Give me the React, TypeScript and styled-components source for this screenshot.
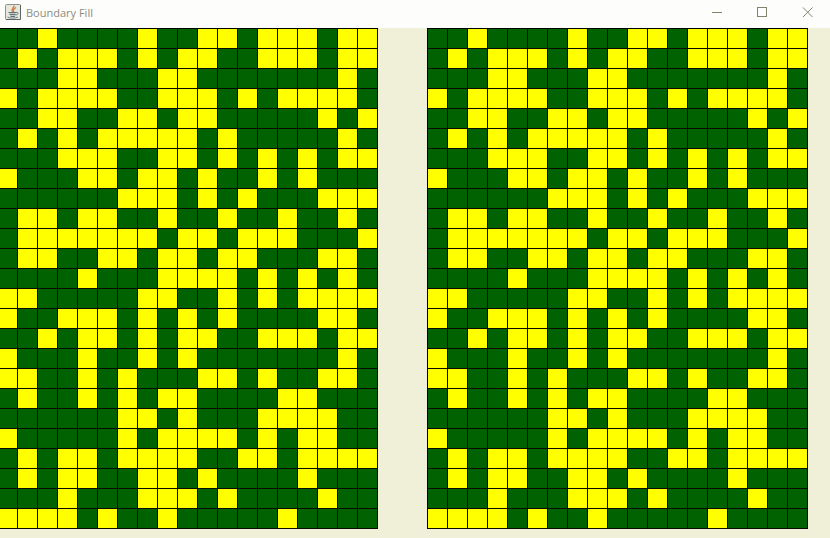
import React from "react";
import styled, { createGlobalStyle } from "styled-components";

const GlobalStyle = createGlobalStyle`
  body {
    margin: 0;
    background: #f0f0d8;
    font-family: "Open Sans", "Noto Sans", sans-serif;
  }
`;

const ROWS = [
  "..Y....Y..YY.YYY.YY",
  ".Y.YYY.Y.YY..YYY.YY",
  "...YY...YY.......Y.",
  "Y.YYYY..YYY.Y.YYYY.",
  "..YY..YY.YY.....Y.Y",
  ".Y.Y.YYYYY.Y.....Y.",
  "...YYY..YY.Y.Y.Y.YY",
  "Y...YY.YY.Y..Y.Y...",
  "......YYY.Y.Y...YYY",
  ".YY.YY..Y..Y..Y..Y.",
  ".YYYYYYY.YY.YYY...Y",
  ".YY..YY.YY.YY...YY.",
  "....Y...YYYY.Y.Y.Y.",
  "YY.....YY..Y.Y.YYYY",
  "Y..YYY.Y.Y.Y....YY.",
  "..Y.YY.Y.YY..YYY.YY",
  "Y...Y..Y.Y.......Y.",
  "YY..Y.Y...YY.Y..YY.",
  ".Y..Y.Y.YY....YY...",
  "......YY.Y...YYYY..",
  "Y.....Y.YYYY.Y.YY..",
  ".Y.YY.YYYY..YY.YYYY",
  ".Y.YY..YY.Y....Y...",
  "...Y...YYY.Y....Y..",
  "YYYY.Y..Y.....Y....",
];

const Window = styled.div`
  display: flex;
  flex-direction: column;
  min-height: 100vh;
  overflow: hidden;
`;

const TitleBar = styled.header`
  display: flex;
  align-items: center;
  height: 28px;
  padding-left: 5px;
  box-sizing: border-box;
  background: #fdfdfb;
`;

const Title = styled.h1`
  flex: 1;
  margin: 0 0 2px 5px;
  font-size: 11px;
  line-height: 16px;
  font-weight: 400;
  color: #8c8c80;
  white-space: nowrap;
`;

const AppIcon = styled.svg`
  display: block;
  flex: none;
  margin-bottom: 4px;
`;

const WindowButtons = styled.div`
  display: flex;
`;

const WindowButton = styled.button`
  display: flex;
  align-items: center;
  justify-content: center;
  width: 45px;
  height: 25px;
  margin-bottom: 3px;
  padding: 0;
  border: 0;
  background: transparent;
  color: #828270;
`;

const Canvas = styled.main`
  display: flex;
  align-items: flex-start;
  gap: 49px;
  flex: 1;
  padding-bottom: 9px;
  background: #f0f0d8;
`;

const Board = styled.div<{ $clipped?: boolean }>`
  display: grid;
  grid-template-columns: ${(p) => (p.$clipped ? "18px" : "20px")} repeat(18, 20px);
  grid-auto-rows: 20px;
  border-top: 1px solid #000;
  border-left: ${(p) => (p.$clipped ? "0" : "1px solid #000")};
`;

const Cell = styled.div<{ $filled: boolean }>`
  border-right: 1px solid #0a0a00;
  border-bottom: 1px solid #0a0a00;
  background: ${(p) => (p.$filled ? "#ffff00" : "#006200")};
`;

function FillBoard({ label, clipped }: { label: string; clipped?: boolean }) {
  return (
    <Board role="img" aria-label={label} $clipped={clipped}>
      {ROWS.flatMap((row, y) =>
        [...row].map((c, x) => <Cell key={`${y}-${x}`} $filled={c === "Y"} />)
      )}
    </Board>
  );
}

function JavaIcon() {
  return (
    <AppIcon width="16" height="16" viewBox="0 0 16 16" fill="none" aria-hidden="true">
      <rect x="0.5" y="0.5" width="15" height="15" rx="1" fill="#e6e8dc" stroke="#8e918c" />
      <path d="M1 15.5h14.5V1" stroke="#5c6462" />
      <path d="M9 1.500C9.500 4 5.500 4.500 7.500 8M11 3.500C8 5 8.500 6 8.500 8" stroke="#cf7d4c" strokeWidth="1.300" />
      <path d="M4 8.500h7l-1 4H5.500z" fill="#c3cbc8" />
      <path d="M3.500 8.500h8M4.500 10.500h6M5.500 12.500h4.500" stroke="#5d7078" />
      <path d="M11 8.500c3-.5 2.500 2.500-.5 2.500" stroke="#5d7078" />
      <path d="M2.500 13c2.500 1.500 7.500 1.500 10.500 0" stroke="#6f7f86" />
    </AppIcon>
  );
}

export default function App() {
  return (
    <>
      <GlobalStyle />
      <Window>
        <TitleBar>
          <JavaIcon />
          <Title>Boundary Fill</Title>
          <WindowButtons>
            <WindowButton type="button" aria-label="Minimize">
              <svg width="11" height="11" viewBox="0 0 11 11" stroke="currentColor">
                <path d="M0 5.500h10" />
              </svg>
            </WindowButton>
            <WindowButton type="button" aria-label="Maximize">
              <svg width="11" height="11" viewBox="0 0 11 11" fill="none" stroke="currentColor">
                <rect x="0.500" y="0.500" width="9" height="9" />
              </svg>
            </WindowButton>
            <WindowButton type="button" aria-label="Close">
              <svg width="11" height="11" viewBox="0 0 11 11" stroke="currentColor">
                <path d="M1 0.500l9.500 9.500M10.500 0.500l-9.500 9.500" />
              </svg>
            </WindowButton>
          </WindowButtons>
        </TitleBar>
        <Canvas>
          <FillBoard label="Boundary fill, left board" clipped />
          <FillBoard label="Boundary fill, right board" />
        </Canvas>
      </Window>
    </>
  );
}
